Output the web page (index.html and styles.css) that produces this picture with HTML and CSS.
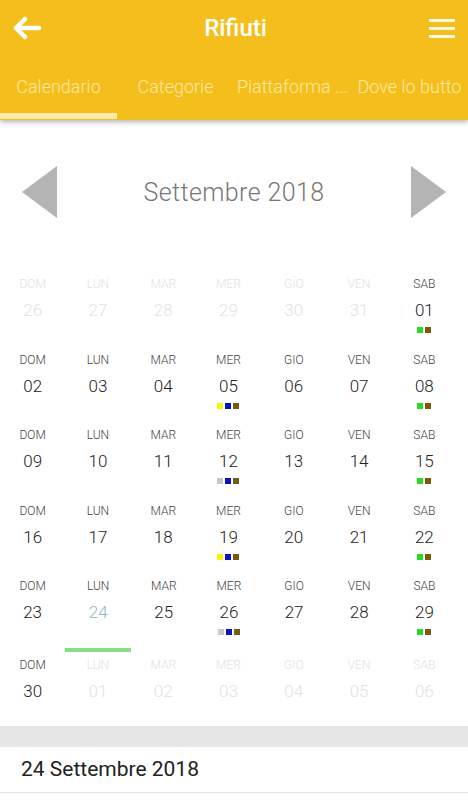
FILE: index.html
```html
<!DOCTYPE html>
<html>

<head>
    <title>Rifiuti</title>
    <link rel="stylesheet" href="styles.css">
</head>

<body>
    <div class="header">
        <div class="topbar">
            <svg class="back" width="30" height="24" viewBox="0 0 30 24">
                <path d="M27 12 H4 M13 3 L4 12 L13 21" fill="none" stroke="#fff" stroke-width="4.5" stroke-linecap="round" stroke-linejoin="round"/>
            </svg>
            <h1>Rifiuti</h1>
            <svg class="menu" width="26" height="20" viewBox="0 0 26 20">
                <rect x="0" y="1" width="26" height="3" fill="#fff8e0"/>
                <rect x="0" y="9" width="26" height="3" fill="#fff8e0"/>
                <rect x="0" y="17" width="26" height="3" fill="#fff8e0"/>
            </svg>
        </div>
        <div class="tabs">
            <div class="tab active"><span>Calendario</span><div class="indicator"></div></div>
            <div class="tab"><span>Categorie</span></div>
            <div class="tab"><span>Piattaforma ...</span></div>
            <div class="tab"><span>Dove lo butto</span></div>
        </div>
    </div>

    <div class="calendar">
        <div class="month">
            <div class="arrow left"></div>
            <div class="month-name">Settembre 2018</div>
            <div class="arrow right"></div>
        </div>
        <div id="weeks"></div>
    </div>

    <div class="band"></div>
    <div class="selected">24 Settembre 2018</div>

<script>
        var labels = ["DOM", "LUN", "MAR", "MER", "GIO", "VEN", "SAB"];
        var G = "#22dd22", B = "#0a12c8", M = "#7a5a0c", Y = "#f8f40a", S = "#c8c8c8";
        var dots = {
            1: [G, M], 5: [Y, B, M], 8: [G, M], 12: [S, B, M], 15: [G, M],
            19: [Y, B, M], 22: [G, M], 26: [S, B, M], 29: [G, M]
        };
        var days = [];
        [26, 27, 28, 29, 30, 31].forEach(function (d) { days.push({ n: d, out: true }); });
        for (var i = 1; i <= 30; i++) days.push({ n: i });
        for (var j = 1; days.length < 42; j++) days.push({ n: j, out: true });

        var weeks = document.getElementById("weeks");
        for (var w = 0; w < 6; w++) {
            var row = document.createElement("div");
            row.className = "week";
            for (var c = 0; c < 7; c++) {
                var day = days[w * 7 + c];
                var cell = document.createElement("div");
                cell.className = "day" + (day.out ? " out" : "") + (!day.out && day.n == 24 ? " today" : "");
                var html = '<div class="label">' + labels[c] + '</div>';
                html += '<div class="num">' + (day.n < 10 ? "0" + day.n : day.n) + '</div>';
                html += '<div class="dots">';
                if (!day.out && dots[day.n]) {
                    dots[day.n].forEach(function (col) {
                        html += '<span style="background:' + col + '"></span>';
                    });
                }
                html += '</div>';
                if (!day.out && day.n == 24) html += '<div class="bar"></div>';
                cell.innerHTML = html;
                row.appendChild(cell);
            }
            weeks.appendChild(row);
        }
    </script>
</body>
</html>
```

FILE: styles.css
```css
body {
    font-family: Roboto, "Liberation Sans", sans-serif;
    background-color: #fff;
    margin: 0;
    width: 468px;
    overflow: hidden;
}

.header {
    background-color: #f4be1c;
    box-shadow: 0 2px 5px rgba(0, 0, 0, 0.3);
    position: relative;
    z-index: 1;
}

.topbar {
    height: 56px;
    display: flex;
    align-items: center;
    padding: 0 13px 0 12px;
}

.topbar h1 {
    flex: 1;
    margin: 0;
    text-align: center;
    color: #fff;
    font-size: 24px;
    font-weight: 500;
}

.back {
    display: block;
}

.menu {
    display: block;
}

.tabs {
    display: flex;
    height: 64px;
}

.tab {
    width: 117px;
    display: flex;
    flex-direction: column;
    align-items: center;
    overflow: hidden;
}

.tab span {
    margin-top: 21px;
    line-height: 20px;
    font-size: 18px;
    font-weight: 300;
    color: #fce9a8;
    white-space: nowrap;
}

.indicator {
    margin-top: auto;
    margin-bottom: 1px;
    width: 100%;
    height: 6px;
    background-color: #fde9a8;
}

.calendar {
    padding-top: 46px;
}

.month {
    display: flex;
    align-items: center;
    justify-content: space-between;
    padding: 0 22px;
    height: 52px;
    margin-bottom: 58px;
}

.arrow {
    width: 0;
    height: 0;
    border-top: 26px solid transparent;
    border-bottom: 26px solid transparent;
}

.arrow.left {
    border-right: 35px solid #b4b4b4;
}

.arrow.right {
    border-left: 35px solid #b4b4b4;
}

.month-name {
    font-size: 25px;
    font-weight: 300;
    color: #777;
    letter-spacing: 0.4px;
}

#weeks {
    padding-right: 11px;
}

.week {
    display: grid;
    grid-template-columns: repeat(7, 1fr);
}

.day {
    display: flex;
    flex-direction: column;
    align-items: center;
    padding-bottom: 18.5px;
}

.week:last-child .day {
    padding-bottom: 12px;
}

.label {
    font-size: 12px;
    font-weight: 300;
    line-height: 16px;
    color: #444;
}

.num {
    margin-top: 6px;
    font-size: 17px;
    font-weight: 300;
    line-height: 24px;
    color: #222;
}

.dots {
    margin-top: 5px;
    height: 6px;
    display: flex;
    gap: 2px;
}

.dots span {
    width: 6px;
    height: 6px;
}

.day.out .label,
.day.out .num {
    color: #e2e2e2;
}

.day.today .num {
    color: #90b8c2;
}

.day.today {
    padding-bottom: 5px;
}

.bar {
    margin-top: 13px;
    width: 66px;
    height: 4px;
    background-color: #88dd88;
}

.band {
    height: 21px;
    background-color: #e6e6e6;
}

.selected {
    height: 45px;
    line-height: 45px;
    padding-left: 21px;
    font-size: 21px;
    color: #222;
    border-bottom: 1px solid #e2e2e2;
}
```
